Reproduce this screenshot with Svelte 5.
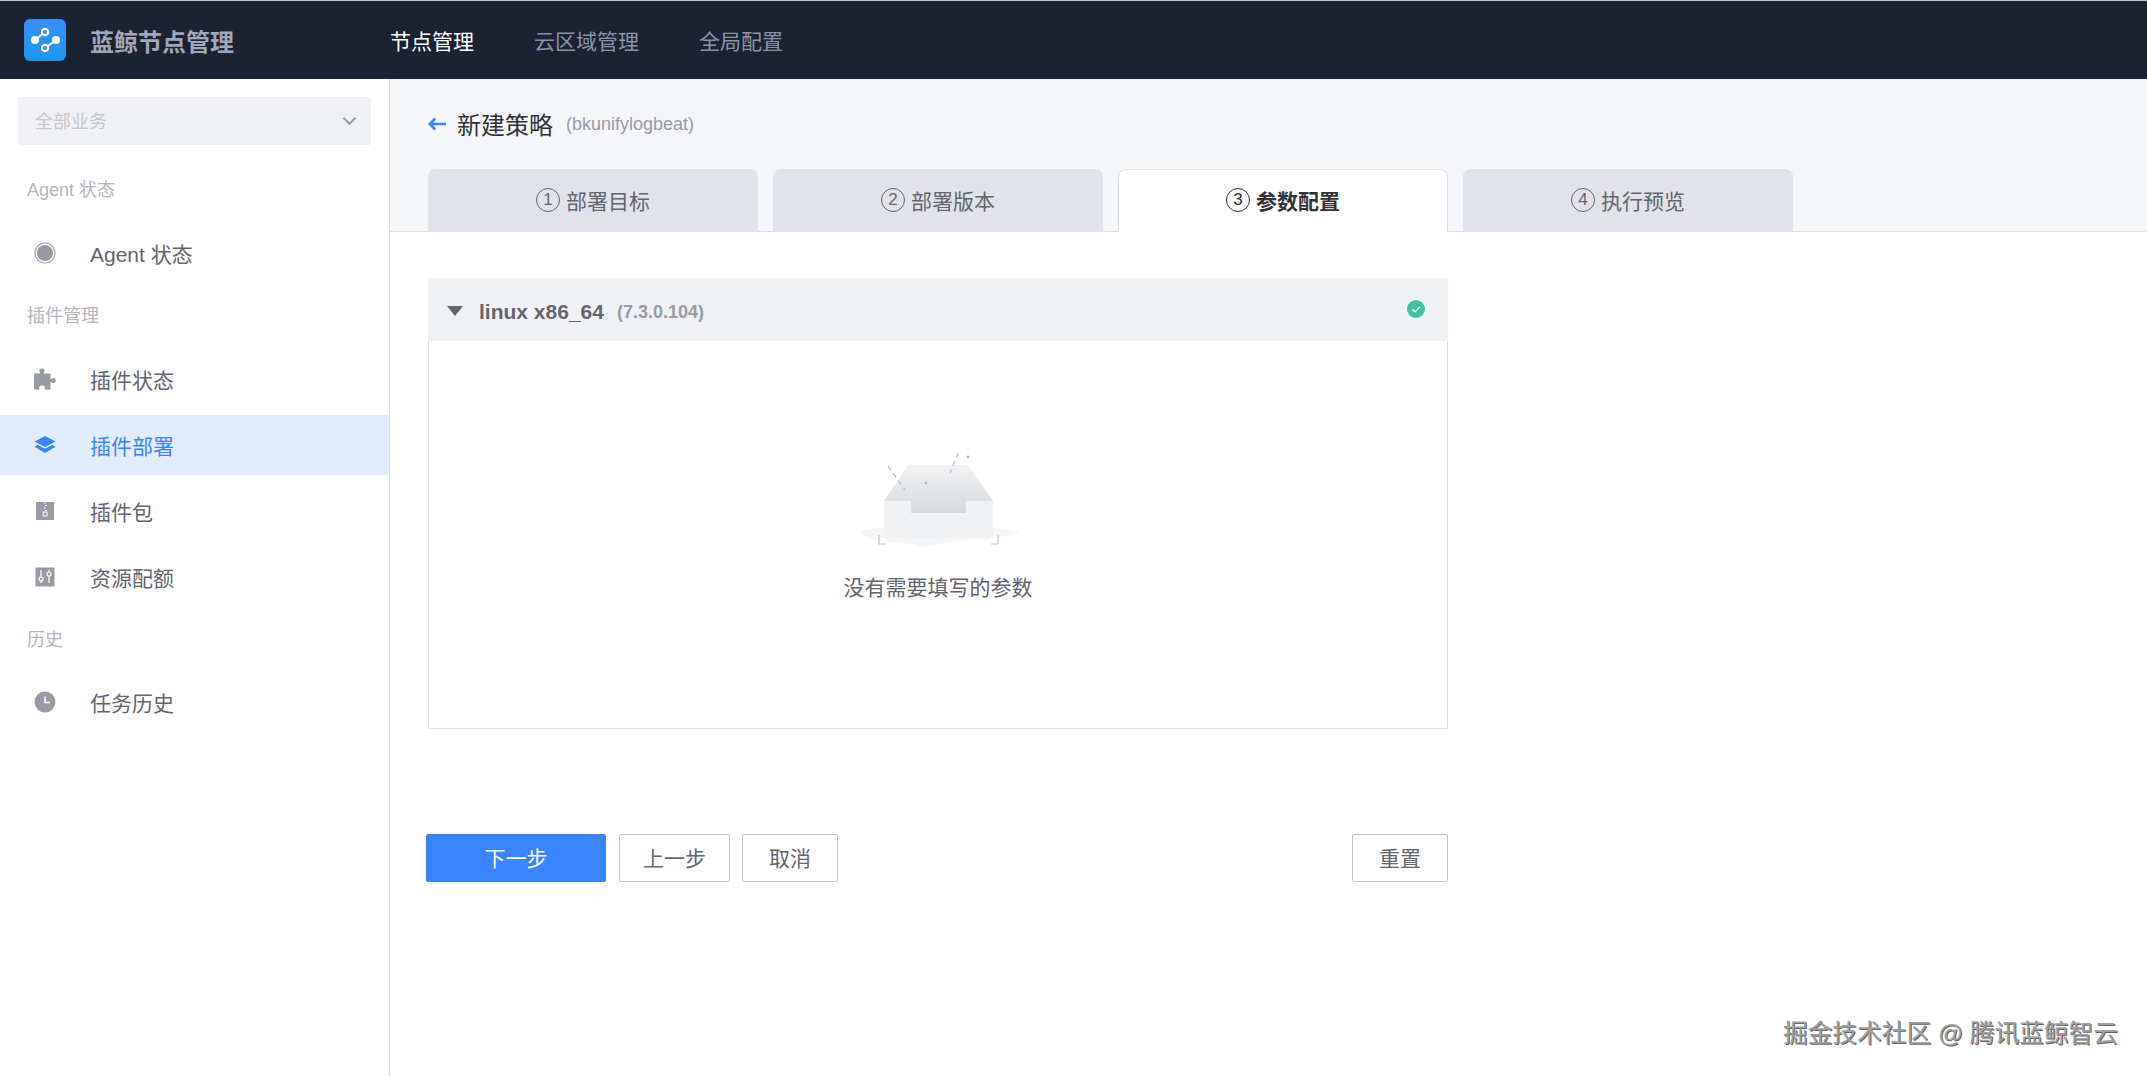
<script>
  const navs = [
    { name: '节点管理', active: true },
    { name: '云区域管理' },
    { name: '全局配置' }
  ];
  const steps = [
    { no: 1, name: '部署目标' },
    { no: 2, name: '部署版本' },
    { no: 3, name: '参数配置', active: true },
    { no: 4, name: '执行预览' }
  ];
</script>

<div class="page">
  <header class="topbar">
    <div class="brand">
      <svg class="logo" viewBox="0 0 42 42" width="42" height="42">
        <defs>
          <linearGradient id="logo-bg" x1="0" y1="0" x2="0" y2="1">
            <stop offset="0" stop-color="#3a8cff" />
            <stop offset="1" stop-color="#1f97ee" />
          </linearGradient>
        </defs>
        <rect width="42" height="42" rx="6" fill="url(#logo-bg)" />
        <path d="M11 21L21 13M21 29L32 21" stroke="#fff" stroke-width="2" />
        <circle cx="11" cy="21" r="4" fill="#fff" />
        <circle cx="32" cy="21" r="4" fill="#fff" />
        <circle cx="21" cy="13" r="3.2" fill="#3a8cff" stroke="#fff" stroke-width="2.2" />
        <circle cx="21" cy="29" r="3.2" fill="#3a8cff" stroke="#fff" stroke-width="2.2" />
      </svg>
      <span class="brand-name">蓝鲸节点管理</span>
    </div>
    <nav class="nav">
      {#each navs as item}
        <span class="nav-item" class:active={item.active}>{item.name}</span>
      {/each}
    </nav>
  </header>

  <div class="body">
    <aside class="side">
      <div class="biz-select">
        <span class="biz-name">全部业务</span>
        <svg viewBox="0 0 16 10" width="15" height="10">
          <path d="M1.5 1.5L8 8l6.5-6.5" fill="none" stroke="#979ba5" stroke-width="2.2" />
        </svg>
      </div>

      <div class="group-title first">Agent 状态</div>
      <div class="menu-item first-item">
        <svg viewBox="0 0 22 22" width="22" height="22">
          <circle cx="11" cy="11" r="10" fill="none" stroke="#a3a5ad" stroke-width="1.2" />
          <circle cx="11" cy="11" r="8" fill="#979ba5" />
        </svg>
        <span>Agent 状态</span>
      </div>

      <div class="group-title">插件管理</div>
      <div class="menu-item first-item">
        <svg viewBox="0 0 22 22" width="22" height="22">
          <path d="M0 5.5H5.5C6 5.5 6.500 5 6 4.200C5 2.800 5.200 .5 8 .5C10.800 .5 11 2.800 10 4.200C9.500 5 10 5.500 10.500 5.500H16.500V10C16.500 10.500 17 11 17.800 10.500C19.200 9.500 21.800 9.700 21.800 12.500C21.800 15.300 19.200 15.500 17.800 14.500C17 14 16.500 14.500 16.500 15V21.500H11C10.300 21.500 10.300 20.800 10.700 20.300C11.500 19 10.500 17.500 8 17.500C5.500 17.500 4.500 19 5.300 20.300C5.700 20.800 5.700 21.500 5 21.500H0Z" fill="#979ba5" />
        </svg>
        <span>插件状态</span>
      </div>
      <div class="menu-item active">
        <svg viewBox="0 0 22 22" width="22" height="22">
          <path d="M11 2l10.500 5.500L11 13 .5 7.500z" fill="#3a84ff" />
          <path d="M3.500 10.800L11 14.800l7.500-4 3 1.900L11 19 .5 12.700z" fill="#3a84ff" />
        </svg>
        <span>插件部署</span>
      </div>
      <div class="menu-item">
        <svg viewBox="0 0 22 22" width="22" height="22">
          <rect x="2" y="2" width="18" height="18" fill="#979ba5" />
          <path d="M10 3h2M11 5.500h2M10 8h2M11 10.500h2" stroke="#fff" stroke-width="1.200" />
          <rect x="9.200" y="12" width="3.800" height="4" fill="none" stroke="#fff" stroke-width="1" />
        </svg>
        <span>插件包</span>
      </div>
      <div class="menu-item">
        <svg viewBox="0 0 22 22" width="22" height="22">
          <rect x="1.500" y="1.500" width="19" height="19" fill="#979ba5" />
          <path d="M7 4v13M15 4v13" stroke="#fff" stroke-width="1.200" />
          <circle cx="7" cy="13" r="2" fill="#979ba5" stroke="#fff" stroke-width="1.200" />
          <circle cx="15" cy="8" r="2" fill="#979ba5" stroke="#fff" stroke-width="1.200" />
        </svg>
        <span>资源配额</span>
      </div>

      <div class="group-title last">历史</div>
      <div class="menu-item last-item">
        <svg viewBox="0 0 22 22" width="22" height="22">
          <circle cx="11" cy="11" r="10.500" fill="#979ba5" />
          <path d="M11 5.500v6h5" fill="none" stroke="#fff" stroke-width="1.500" />
        </svg>
        <span>任务历史</span>
      </div>
    </aside>

    <main class="main">
      <div class="head">
        <div class="title-row">
          <svg class="back" viewBox="0 0 20 14" width="19" height="14">
            <path d="M7.500 1.200L2 7l5.500 5.800M2.500 7H19" fill="none" stroke="#3a84ff" stroke-width="2.800" />
          </svg>
          <span class="title">新建策略</span>
          <span class="plugin-name">(bkunifylogbeat)</span>
        </div>
        <div class="tabs">
          {#each steps as step}
            <div class="tab" class:active={step.active}>
              <span class="num">{step.no}</span>
              <span>{step.name}</span>
            </div>
          {/each}
        </div>
      </div>

      <div class="content">
        <section class="card">
          <div class="card-head">
            <span class="caret"></span>
            <span class="os">linux x86_64</span>
            <span class="version">(7.3.0.104)</span>
            <svg class="ok" viewBox="0 0 18 18" width="18" height="18">
              <circle cx="9" cy="9" r="9" fill="#3fc2a0" />
              <path d="M5.200 9.200L8 11.800l4.800-5" fill="none" stroke="#fff" stroke-width="1.200" />
            </svg>
          </div>
          <div class="card-body">
            <svg class="empty-pic" viewBox="0 0 170 100" width="170" height="100">
              <defs>
                <linearGradient id="box-top" x1="0" y1="0" x2="0" y2="1">
                  <stop offset="0" stop-color="#f2f3f4" />
                  <stop offset="1" stop-color="#d8d9dc" />
                </linearGradient>
              </defs>
              <path d="M6 76c10-4 18-4 28-4h103c12 0 20 1 30 5-10 3-24 5-40 6-22 1-42 5-58 9-8-4-24-6-40-7-9-1-18-4-23-9z" fill="#f5f6f8" />
              <path d="M55 9H115L140 45H113V57H58V45H31z" fill="url(#box-top)" />
              <path d="M31 45H58V57H113V45H140V82H31z" fill="#f1f2f4" />
              <path d="M26 79v9h7M138 88h7v-9" fill="none" stroke="#c4c6cc" stroke-width="1.200" />
              <path d="M35 10l17 24" fill="none" stroke="#b5b7bd" stroke-width="1.200" stroke-dasharray="5 4" />
              <path d="M105 -3l-8 20" fill="none" stroke="#b5b7bd" stroke-width="1.200" stroke-dasharray="5 4" />
              <circle cx="73" cy="27" r="1.400" fill="#b5b7bd" />
              <circle cx="115" cy="1" r="1.400" fill="#b5b7bd" />
            </svg>
            <p class="empty-text">没有需要填写的参数</p>
          </div>
        </section>

        <div class="actions">
          <button class="btn primary">下一步</button>
          <button class="btn prev">上一步</button>
          <button class="btn plain">取消</button>
          <button class="btn plain reset">重置</button>
        </div>
      </div>
    </main>
  </div>

  <div class="mark">掘金技术社区 @ 腾讯蓝鲸智云</div>
</div>

<style>
  :global(body) {
    margin: 0;
    background: #fff;
  }

  .page {
    position: relative;
    width: 2147px;
    height: 1076px;
    overflow: hidden;
    font-family: "Liberation Sans", "Noto Sans CJK SC", sans-serif;
    color: #63656e;
  }

  .topbar {
    display: flex;
    align-items: center;
    height: 78px;
    border-top: 1px solid #c9ccd4;
    background: #1a2234;
  }

  .brand {
    display: flex;
    align-items: center;
    width: 390px;
    padding-left: 24px;
    box-sizing: border-box;
    gap: 24px;
  }

  .logo {
    flex: none;
  }

  .brand-name {
    font-size: 24px;
    font-weight: 700;
    color: #a0a8b8;
  }

  .nav {
    display: flex;
    gap: 60px;
  }

  .nav-item {
    font-size: 21px;
    color: #8a94a8;
  }

  .nav-item.active {
    color: #fff;
  }

  .body {
    display: flex;
    height: 997px;
  }

  .side {
    width: 390px;
    flex: none;
    box-sizing: border-box;
    padding-top: 18px;
    border-right: 1px solid #dcdee5;
  }

  .biz-select {
    display: flex;
    align-items: center;
    justify-content: space-between;
    height: 48px;
    width: 353px;
    margin-left: 18px;
    padding: 0 14px 0 17px;
    box-sizing: border-box;
    border-radius: 2px;
    background: #f0f1f5;
    font-size: 18px;
    color: #c4c6cc;
  }

  .biz-name {
    margin-bottom: 2px;
  }

  .group-title {
    height: 30px;
    line-height: 30px;
    margin-top: 18px;
    padding-left: 27px;
    font-size: 18px;
    color: #b2b5bd;
  }

  .group-title.first {
    margin-top: 30px;
  }

  .group-title.last {
    margin-top: 18px;
  }

  .menu-item {
    display: flex;
    align-items: center;
    gap: 34px;
    height: 60px;
    margin-top: 6px;
    padding-left: 34px;
    font-size: 21px;
    color: #63656e;
  }

  .menu-item.first-item {
    margin-top: 18px;
  }

  .menu-item.last-item {
    margin-top: 17px;
  }

  .menu-item svg {
    flex: none;
  }

  .menu-item.active {
    background: #e1ecff;
    color: #3a84ff;
  }

  .main {
    flex: 1;
    min-width: 0;
  }

  .head {
    height: 153px;
    box-sizing: border-box;
    padding: 0 0 0 38px;
    background: #f5f6fa;
    border-bottom: 1px solid #dcdee5;
  }

  .title-row {
    display: flex;
    align-items: center;
    height: 90px;
  }

  .back {
    flex: none;
    margin-right: 10px;
  }

  .title {
    font-size: 24px;
    color: #313238;
    margin-bottom: 2px;
  }

  .plugin-name {
    margin-left: 13px;
    font-size: 18px;
    color: #979ba5;
  }

  .tabs {
    display: flex;
    gap: 15px;
  }

  .tab {
    display: flex;
    align-items: center;
    justify-content: center;
    gap: 6px;
    width: 330px;
    height: 63px;
    padding-bottom: 2px;
    box-sizing: border-box;
    border-radius: 8px 8px 0 0;
    background: #e1e2ea;
    font-size: 21px;
    color: #63656e;
  }

  .tab.active {
    background: #fff;
    border: 1px solid #dcdee5;
    border-bottom: 0;
    color: #313238;
    font-weight: 700;
  }

  .num {
    display: flex;
    align-items: center;
    justify-content: center;
    width: 22px;
    height: 22px;
    border: 1px solid currentColor;
    border-radius: 50%;
    font-size: 17px;
    font-weight: 400;
  }

  .content {
    padding: 46px 0 0 36px;
    width: 1022px;
  }

  .card {
    margin-left: 2px;
    width: 1020px;
  }

  .card-head {
    display: flex;
    align-items: center;
    height: 63px;
    padding: 0 23px 0 19px;
    background: #f0f1f5;
  }

  .caret {
    width: 0;
    height: 0;
    margin-top: 2px;
    border-left: 8px solid transparent;
    border-right: 8px solid transparent;
    border-top: 10px solid #63656e;
    margin-right: 16px;
  }

  .os {
    margin-top: 4px;
    font-size: 21px;
    font-weight: 700;
    color: #63656e;
  }

  .version {
    margin-top: 5px;
    margin-left: 13px;
    font-size: 18px;
    font-weight: 700;
    color: #979ba5;
  }

  .ok {
    margin-left: auto;
    margin-bottom: 2px;
  }

  .card-body {
    display: flex;
    flex-direction: column;
    align-items: center;
    height: 388px;
    box-sizing: border-box;
    padding-top: 115px;
    border: 1px solid #dcdee5;
    border-top: 0;
    border-radius: 0 0 2px 2px;
  }

  .empty-pic {
    overflow: visible;
  }

  .empty-text {
    margin: 17px 0 0;
    font-size: 21px;
    line-height: 30px;
    color: #63656e;
  }

  .actions {
    display: flex;
    margin-top: 105px;
  }

  .btn {
    height: 48px;
    width: 96px;
    padding: 0 0 3px;
    margin-left: 12px;
    box-sizing: border-box;
    border: 1px solid #c4c6cc;
    border-radius: 2px;
    background: #fff;
    font-family: inherit;
    font-size: 21px;
    color: #63656e;
  }

  .btn.primary {
    width: 180px;
    margin-left: 0;
    border-color: #3a84ff;
    background: #3a84ff;
    color: #fff;
  }

  .btn.prev {
    width: 111px;
    margin-left: 13px;
  }

  .btn.reset {
    margin-left: auto;
  }

  .mark {
    position: absolute;
    right: 29px;
    bottom: 27px;
    font-size: 24.7px;
    line-height: 30px;
    color: #a0a0a0;
    text-shadow: 1px 1px 0 #666;
  }
</style>
